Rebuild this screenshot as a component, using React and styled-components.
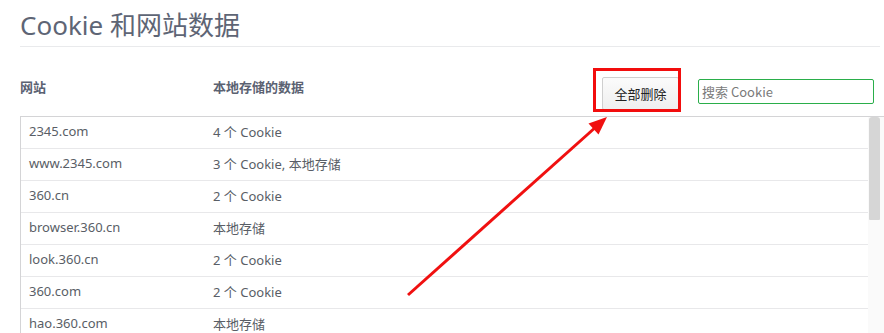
import React from 'react';
import styled, { createGlobalStyle } from 'styled-components';

const GlobalStyle = createGlobalStyle`
  html, body {
    margin: 0;
    padding: 0;
    background: #fff;
  }

  body {
    font-family: "Noto Sans", "Noto Sans CJK SC", sans-serif;
    color: #555a63;
  }
`;

const StyledPage = styled.div`
  position: relative;
  width: 884px;
  height: 333px;
  overflow: hidden;
  padding-left: 20px;
  box-sizing: border-box;
`;

const StyledTitle = styled.h1`
  margin: 0 4px 0 0;
  height: 46px;
  line-height: 50px;
  font-size: 26px;
  font-weight: 400;
  color: #5e6575;
  border-bottom: 1px solid #e9eaec;
  white-space: nowrap;
`;

const StyledToolbar = styled.div`
  display: flex;
  align-items: flex-start;
  height: 69px;
  padding-top: 21px;
  box-sizing: border-box;
`;

const StyledLabel = styled.div`
  width: ${props => props.width || 'auto'};
  flex: ${props => (props.grow ? 1 : 'none')};
  margin-top: 11px;
  font-size: 13px;
  font-weight: 700;
  line-height: 16px;
  color: #5b6272;
`;

const StyledHighlight = styled.div`
  position: relative;
  margin-top: 9px;

  &::after {
    content: '';
    position: absolute;
    top: -9px;
    left: -9px;
    right: -2px;
    bottom: -2px;
    border: 3px solid #f20d0d;
    pointer-events: none;
  }
`;

const StyledButton = styled.button`
  display: block;
  width: 77px;
  height: 33px;
  padding: 0;
  border: 1px solid #cfcfcf;
  border-radius: 2px;
  background: linear-gradient(#fbfbfb, #efefef);
  font-family: "Noto Sans CJK SC", sans-serif;
  font-size: 13px;
  color: #222;
`;

const StyledSearch = styled.input`
  width: 176px;
  height: 25px;
  margin: 11px 10px 0 19px;
  padding: 0 0 0 3px;
  box-sizing: border-box;
  border: 1px solid #2aae4a;
  border-radius: 2px;
  outline: none;
  font-family: "Noto Sans CJK SC", sans-serif;
  font-size: 13px;
  color: #333;

  &::placeholder {
    color: #7a7a7a;
  }
`;

const StyledTable = styled.div`
  display: flex;
  height: 217px;
  border-top: 1px solid #d4d4d6;
  border-left: 1px solid #d4d4d6;
  overflow: hidden;
`;

const StyledRows = styled.div`
  flex: 1;
`;

const StyledRow = styled.div`
  display: flex;
  align-items: center;
  height: 28px;
  padding-bottom: 3px;
  border-bottom: 1px solid #e8e8ea;
  font-size: 13px;
  color: #595e66;
`;

const StyledCell = styled.div`
  width: ${props => props.width || 'auto'};
  flex: ${props => (props.grow ? 1 : 'none')};
  padding-left: ${props => props.pad || 0};
  box-sizing: border-box;
  white-space: nowrap;
`;

const StyledScrollbar = styled.div`
  width: 16px;
  flex: none;
  background: #fafafa;
  padding-left: 1px;
  box-sizing: border-box;
`;

const StyledThumb = styled.div`
  width: 11px;
  height: 103px;
  border-radius: 3px 3px 1px 1px;
  background: #d6d6d6;
`;

const StyledArrow = styled.svg`
  position: absolute;
  top: 0;
  left: 0;
  pointer-events: none;
`;

const sites = [
  { host: '2345.com', data: '4 个 Cookie' },
  { host: 'www.2345.com', data: '3 个 Cookie, 本地存储' },
  { host: '360.cn', data: '2 个 Cookie' },
  { host: 'browser.360.cn', data: '本地存储' },
  { host: 'look.360.cn', data: '2 个 Cookie' },
  { host: '360.com', data: '2 个 Cookie' },
  { host: 'hao.360.com', data: '本地存储' },
];

const Arrow = () => (
  <StyledArrow width="884" height="333" viewBox="0 0 884 333">
    <line x1="408" y1="295" x2="597" y2="126" stroke="#f01010" strokeWidth="3" />
    <polygon points="607,117 598.5,134.5 588.5,123.5" fill="#f01010" />
  </StyledArrow>
);

const App = () => (
  <>
    <GlobalStyle />
    <StyledPage>
      <StyledTitle>Cookie 和网站数据</StyledTitle>
      <StyledToolbar>
        <StyledLabel width="193px">网站</StyledLabel>
        <StyledLabel grow>本地存储的数据</StyledLabel>
        <StyledHighlight>
          <StyledButton type="button">全部删除</StyledButton>
        </StyledHighlight>
        <StyledSearch type="search" placeholder="搜索 Cookie" />
      </StyledToolbar>
      <StyledTable>
        <StyledRows>
          {sites.map(site => (
            <StyledRow key={site.host}>
              <StyledCell width="192px" pad="8px">{site.host}</StyledCell>
              <StyledCell grow>{site.data}</StyledCell>
            </StyledRow>
          ))}
        </StyledRows>
        <StyledScrollbar>
          <StyledThumb />
        </StyledScrollbar>
      </StyledTable>
      <Arrow />
    </StyledPage>
  </>
);

export default App;
